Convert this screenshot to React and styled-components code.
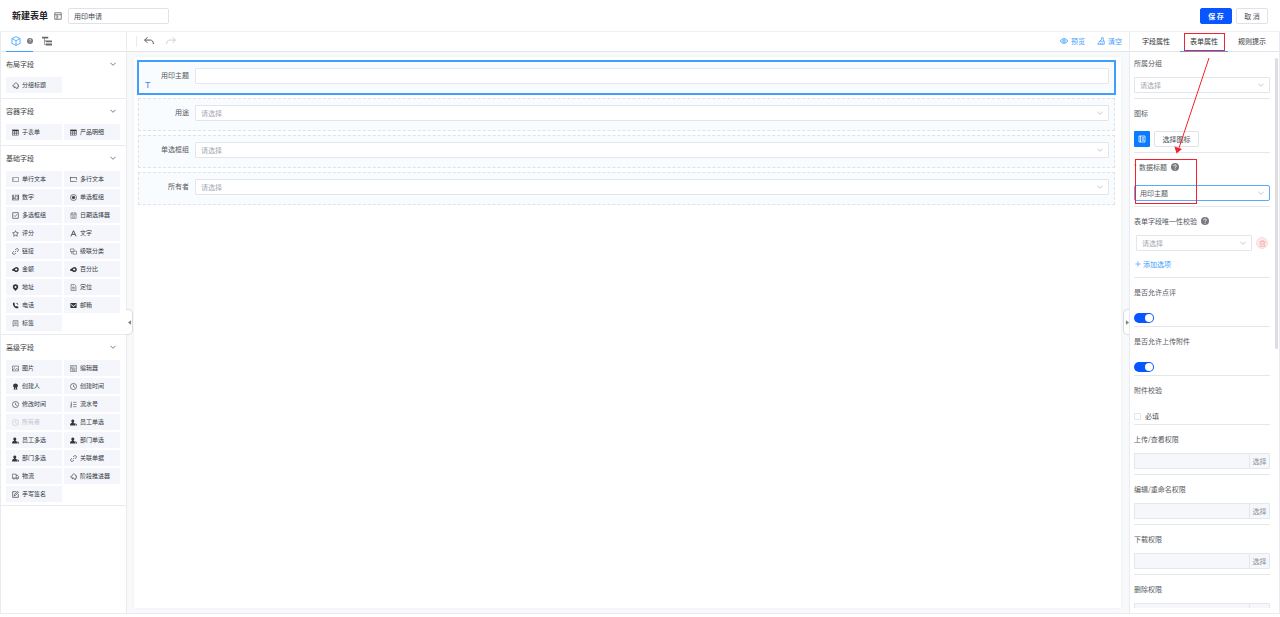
import React from "react";
import styled, { createGlobalStyle, css } from "styled-components";

const blue = "#409eff";
const line = "#e9ebf0";
const ink = "#4b4e55";

const GlobalStyle = createGlobalStyle`
  * { box-sizing: border-box; }
  body { margin: 0; background: #fff; }
  body, button, input, select {
    font-family: "Noto Sans CJK SC", sans-serif;
    font-size: 7px;
    line-height: 10px;
    color: ${ink};
  }
`;

const App = styled.div`
  position: relative;
  height: 100vh;
  display: flex;
  flex-direction: column;
  padding-bottom: 3px;
  overflow: hidden;
`;

/* header */
const Header = styled.header`
  flex: none;
  height: 32px;
  display: flex;
  align-items: center;
  padding: 0 12px;
  border-bottom: 1px solid #f0f1f4;
`;
const Title = styled.h1`
  margin: 0;
  font-size: 9px;
  line-height: 12px;
  font-weight: 700;
  color: #1f2126;
`;
const NameInput = styled.input`
  width: 101px;
  height: 16px;
  padding: 0 5px;
  border: 1px solid #dfe2e8;
  border-radius: 2px;
  color: #43464c;
  outline: none;
`;
const HeaderIcon = styled.span`
  display: flex;
  margin: 0 6px;
`;
const Spacer = styled.div`
  flex: 1;
`;
const Button = styled.button`
  height: 16px;
  width: 32px;
  padding: 0;
  margin-left: ${(p) => (p.$primary ? 0 : 4)}px;
  border-radius: 2px;
  border: 1px solid ${(p) => (p.$primary ? "#0756ff" : "#dfe2e8")};
  background: ${(p) => (p.$primary ? "#0756ff" : "#fff")};
  color: ${(p) => (p.$primary ? "#fff" : ink)};
  font-weight: ${(p) => (p.$primary ? 700 : 400)};
`;

/* frame */
const Main = styled.main`
  flex: 1;
  min-height: 0;
  display: flex;
  border: 1px solid ${line};
  border-top: 0;
`;
const Tabs = styled.div`
  flex: none;
  height: 20px;
  display: flex;
  border-bottom: 1px solid #e2e5ea;
`;

/* palette */
const Palette = styled.aside`
  flex: none;
  width: 126px;
  border-right: 1px solid ${line};
`;
const PaletteTab = styled.button`
  width: ${(p) => (p.$active ? 27 : 24)}px;
  height: 20px;
  padding: 0 0 1px ${(p) => (p.$active ? 4 : 0)}px;
  display: flex;
  align-items: center;
  justify-content: center;
  gap: 6px;
  border: 0;
  background: none;
  border-bottom: 1px solid ${(p) => (p.$active ? blue : "transparent")};
`;
const PaletteTabs = styled(Tabs)`
  padding-left: 5px;
  gap: 2px;
`;
const Section = styled.section`
  padding: 0 5px ${(p) => (p.$long ? 3 : 5)}px;
  border-bottom: 1px solid ${line};
`;
const SectionHead = styled.h2`
  margin: 0;
  height: 25px;
  display: flex;
  align-items: center;
  justify-content: space-between;
  padding: 0 5px 2px 0;
  font-size: 7px;
  line-height: 10px;
  font-weight: 400;
  color: #3c3f45;
`;
const Items = styled.div`
  display: grid;
  grid-template-columns: 56px 56px;
  gap: 2px;
`;
const Item = styled.button`
  height: 16px;
  display: flex;
  align-items: center;
  gap: 3px;
  padding: 0 0 0 6px;
  border: 0;
  background: #f4f6fc;
  font-size: 6px;
  white-space: nowrap;
  color: ${(p) => (p.disabled ? "#c0c4cc" : "#33363b")};
`;

/* work area */
const Work = styled.div`
  position: relative;
  flex: 1;
  min-width: 0;
  display: flex;
  flex-direction: column;
  background: #f8f9fa;
`;
const Toolbar = styled.div`
  flex: none;
  height: 20px;
  display: flex;
  align-items: center;
  padding: 0 7px 1px 9px;
  background: #fff;
  border-bottom: 1px solid #e2e5ea;
`;
const Separator = styled.span`
  width: 1px;
  height: 11px;
  margin-right: 7px;
  background: #e9ebf0;
`;
const ToolButton = styled.button`
  display: flex;
  align-items: center;
  gap: 3px;
  padding: 0;
  border: 0;
  background: none;
  color: ${blue};
  & + & { margin-left: ${(p) => (p.$wide ? 12 : 8)}px; }
`;
const Sheet = styled.form`
  flex: 1;
  min-height: 0;
  display: flex;
  flex-direction: column;
  gap: 4px;
  margin: 5px 8px 5px 7px;
  padding: 4px 6px 4px 4px;
  background: #fff;
  box-shadow: 0 0 3px rgba(0, 0, 0, 0.05);
`;
const FieldRow = styled.div`
  position: relative;
  height: 33px;
  display: flex;
  align-items: flex-start;
  gap: 6px;
  padding: 6px 5px 0 0;
  background: #f9fcff;
  border: 1px dashed #dfe3e8;
  ${(p) =>
    p.$selected &&
    css`
      border: 1px solid ${blue};
      outline: 1px solid ${blue};
    `}
`;
const FieldLabel = styled.label`
  width: 50px;
  line-height: 15px;
  text-align: right;
  color: #565960;
`;
const TypeMark = styled.span`
  position: absolute;
  left: 6px;
  bottom: 3px;
  font-family: "Liberation Sans", sans-serif;
  font-size: 9px;
  color: #3f86f5;
`;
const Text = styled.input`
  flex: 1;
  min-width: 0;
  height: 16px;
  border: 1px solid #e4e7ec;
  border-radius: 1px;
  background: #fff;
  outline: none;
`;
const SelectBox = styled.span`
  position: relative;
  flex: 1;
  min-width: 0;
  display: flex;
  svg {
    position: absolute;
    right: 6px;
    top: 5px;
    pointer-events: none;
    color: #a9adb5;
  }
`;
const SelectInput = styled.select`
  appearance: none;
  width: 100%;
  height: 16px;
  padding: 0 5px;
  border: 1px solid ${(p) => (p.$focused ? "#5aa9fb" : "#e2e5ea")};
  border-radius: ${(p) => (p.$focused ? 2 : 1)}px;
  background: #fff;
  outline: none;
  color: ${(p) => (p.$filled ? "#565960" : "#a4a8b0")};
`;
const Handle = styled.button`
  position: absolute;
  top: 277px;
  width: 7px;
  height: 26px;
  padding: 0;
  display: flex;
  align-items: center;
  justify-content: center;
  background: #fff;
  border: 1px solid #d9dce1;
  color: #7c8087;
  ${(p) =>
    p.$side === "left"
      ? css`
          left: -1px;
          border-left: 0;
          border-radius: 0 5px 5px 0;
        `
      : css`
          right: -1px;
          border-right: 0;
          border-radius: 5px 0 0 5px;
        `}
`;

/* properties */
const Props = styled.aside`
  position: relative;
  flex: none;
  width: 150px;
  display: flex;
  flex-direction: column;
  border-left: 1px solid ${line};
`;
const PropTabs = styled(Tabs)`
  padding-left: 2px;
`;
const PropTab = styled.button`
  width: 48px;
  height: 20px;
  padding: 0 0 2px;
  border: 0;
  border-bottom: 1px solid ${(p) => (p.$active ? blue : "transparent")};
  background: none;
  color: #303338;
`;
const PropList = styled.div`
  flex: 1;
  min-height: 0;
  overflow: hidden;
  margin-bottom: 5px;
  padding: 0 9px 0 4px;
`;
const Block = styled.div`
  padding-bottom: ${(p) => p.$bottom ?? 5}px;
  border-bottom: 1px solid #e4e6ea;
`;
const BlockLabel = styled.label`
  display: flex;
  align-items: center;
  gap: 4px;
  height: 28px;
  color: #565960;
  ${Block}:first-child > & { height: 21px; }
`;
const Required = styled.span`
  width: 1px;
  height: 10px;
  color: #ff4d4f;
  font-size: 6px;
`;
const Control = styled.div`
  display: flex;
  align-items: center;
  height: 16px;
  margin-top: ${(p) => (p.$tight ? 0 : 4)}px;
  padding-left: ${(p) => (p.$indent ? 2 : 0)}px;
`;
const IconTile = styled.span`
  width: 16px;
  height: 16px;
  display: flex;
  align-items: center;
  justify-content: center;
  margin-right: 4px;
  border-radius: 1px;
  background: #0a7cff;
  color: #fff;
`;
const PlainButton = styled.button`
  height: 16px;
  width: 45px;
  padding: 0;
  border: 1px solid #dfe2e8;
  border-radius: 2px;
  background: #fff;
`;
const RoundButton = styled.button`
  width: 12px;
  height: 12px;
  margin: 0 2px 0 4px;
  padding: 0;
  display: flex;
  align-items: center;
  justify-content: center;
  border: 1px solid #fbdcdc;
  border-radius: 50%;
  background: #fdeaea;
  color: #f5a3a3;
`;
const LinkButton = styled.button`
  height: 16px;
  display: flex;
  align-items: center;
  gap: 2px;
  margin-top: 5px;
  padding: 0 0 0 1px;
  border: 0;
  background: none;
  color: ${blue};
`;
const Switch = styled.input`
  appearance: none;
  display: flex;
  align-items: center;
  justify-content: flex-end;
  width: 20px;
  height: 10px;
  margin: 0;
  padding: 1px;
  border-radius: 5px;
  background: #0756ff;
  &::after {
    content: "";
    width: 8px;
    height: 8px;
    border-radius: 50%;
    background: #fff;
  }
`;
const CheckLabel = styled.label`
  display: flex;
  align-items: center;
  gap: 4px;
`;
const Check = styled.input`
  appearance: none;
  width: 7px;
  height: 7px;
  margin: 0;
  border: 1px solid #e2e5ea;
  border-radius: 1px;
  background: #fff;
`;
const PickText = styled.input`
  flex: 1;
  min-width: 0;
  height: 16px;
  border: 1px solid #e4e7ed;
  border-right: 0;
  border-radius: 1px 0 0 1px;
  background: #f5f7fb;
`;
const PickButton = styled.button`
  width: 21px;
  height: 16px;
  padding: 0;
  border: 1px solid #e4e7ed;
  border-radius: 0 1px 1px 0;
  background: #f5f7fa;
  color: #8b8f96;
`;
const Thumb = styled.span`
  position: absolute;
  top: 26px;
  right: 1px;
  width: 3px;
  height: 50%;
  border-radius: 2px;
  background: #dcdde0;
`;
const Notes = styled.svg`
  position: absolute;
  top: 0;
  right: 0;
  width: 150px;
  height: 210px;
  pointer-events: none;
`;

/* icons */
const S = ({ d, size = 7, w = 1.6, children, ...rest }) => (
  <svg width={size} height={size} viewBox="0 0 16 16" fill="none" stroke="currentColor" strokeWidth={w} aria-hidden="true" {...rest}>
    {d && <path d={d} />}
    {children}
  </svg>
);
const Fill = ({ d, size = 7, ...rest }) => (
  <svg width={size} height={size} viewBox="0 0 16 16" fill="currentColor" fillRule="evenodd" aria-hidden="true" {...rest}>
    <path d={d} />
  </svg>
);
const Chevron = ({ size = 6 }) => <S size={size} w={1.8} d="M1 4.5 8 11.500l7-7" />;
const Help = ({ size = 8 }) => (
  <svg width={size} height={size} viewBox="0 0 16 16" aria-hidden="true">
    <circle cx="8" cy="8" r="8" fill="#77797e" />
    <path d="M5.300 6.300c0-3.600 5.500-3.400 5.300-.2-.1 1.800-2.500 1.800-2.500 3.500" fill="none" stroke="#fff" strokeWidth="1.700" />
    <circle cx="8.100" cy="12.200" r="1.100" fill="#fff" />
  </svg>
);
const clock = "M8 1a7 7 0 1 0 0 14A7 7 0 0 0 8 1ZM8 4v4.500l3.500 1.500";
const puzzle = "M9 1.500 13 4.500v2.500h2v4h-2v3.500H9.500l-1-3-5-.5-2.500-2.500 3.500-1.500L6 3.500ZM5.500 11v3";
const link = "M6.500 9.500l3-3M7 4.500l2.500-2.500a3.200 3.200 0 0 1 4.500 4.500L11.500 9M9 11.500 6.500 14A3.200 3.200 0 0 1 2 9.500L4.500 7";
const people = "M6.500 1a3.500 3.500 0 0 1 2 6.300l-.3 1.200c2.500.7 3.800 2.500 3.800 6.500H0c0-4 1.300-5.800 4.600-6.500l-.3-1.200A3.500 3.500 0 0 1 6.500 1ZM12 9.500c2.500.3 4 2 4 5.500h-3c0-2.500-.3-4-1-5.500Z";
const coin = "M9.500 2a6 6 0 1 1-4.800 9.600H1.500V10H0V7.500h3V5h2A6 6 0 0 1 9.500 2ZM9.500 5 6.500 8l3 3L12.500 8Z";
const icons = {
  group: <S w={1.400} d={puzzle} />,
  table: (
    <S w={1.100}>
      <rect x="1" y="2" width="14" height="12" />
      <path d="M1 3.500h14" strokeWidth="2.500" />
      <path d="M1 7h14M1 10.500h14M5.700 2v12M10.300 2v12" />
    </S>
  ),
  line: <S w={1.300} d="M1 3.500h14v9H1ZM3.500 6v4" opacity="0.750" />,
  area: <S w={1.400} d="M15 9V3.500H1v9h10M12 12.500h3.500M1 2v3" />,
  number: <S w={1.300} d="M1 13.500h14M1.500 2.500h2v8m-2 0h4M6.500 2.500h3v4h-3v4h3M11 2.500h3.500v8H11M11.500 6.500h3M15 2v12M1 2v12" />,
  radio: (
    <S w={1.400}>
      <circle cx="8" cy="8" r="7" />
      <circle cx="8" cy="8" r="3" fill="currentColor" />
    </S>
  ),
  check: <S w={1.400} d="M1.500 1.500h13v13h-13ZM4.500 7.500l2.500 3 5-5.500" />,
  date: <S w={1} d="M2 2.500h12v12H2ZM2 6h12M5 .5v3M11 .5v3M4.500 9h7M4.500 12h7" />,
  star: <S w={1.400} d="M8 1.500l2 4.300 4.700.6-3.500 3.200.9 4.700L8 12l-4.100 2.300.9-4.700L1.300 6.400 6 5.800Z" />,
  letter: <S w={1.900} d="M2 14.500 8 1.500l6 13M4.500 10h7" />,
  link: <S w={1.400} d={link} />,
  cascade: <S w={1.100} d="M1 2h8v6H1ZM7 8v6h8V7H9M3 8v4h3" />,
  coin: <Fill d={coin} />,
  pin: <Fill d="M8 0.500a6.200 6.200 0 0 1 6.200 6.200c0 3.600-3.700 6.300-6.200 9.300-2.500-3-6.200-5.700-6.200-9.300A6.200 6.200 0 0 1 8 .5ZM8 4.500a2.300 2.300 0 1 0 0 4.600 2.300 2.300 0 0 0 0-4.600Z" />,
  page: <S w={1.200} d="M2.500 1h7.500l3.500 3.500V15h-11ZM5 8h6M5 11h6M6 5h2" />,
  phone: <Fill d="M2.500 1.500 5 1l2 4-1.500 1.500c.8 1.700 2 3 3.700 3.800L11 9l3.800 2-.6 2.800C9 17 0 9 2.500 1.500ZM9 1.500A5.500 5.500 0 0 1 14.500 7H13A4 4 0 0 0 9 3Z" />,
  mail: <Fill d="M1 2.500h14v11H1ZM2.500 4.500 8 9l5.500-4.500v2.300L8 11.200 2.500 6.800Z" />,
  tag: <S w={1.200} d="M2.500 1.500h11v13l-3-2.500h-5l-3 2.500ZM5 5h6M5 8.500h6" />,
  image: <S w={1.200} d="M1 2.500h14v11H1ZM1 12l4-4 3 3 3-3.500 4 4M4.500 5.500h1.500" />,
  editor: <S w={1} d="M1 1h14v14H1ZM3.500 4h4v4h-4ZM9.500 4.500h3.500M9.500 8h3.500M3.500 10.500h9M3.500 13h9" />,
  creator: <Fill d="M8 1c3.500 0 5.500 2.300 5.500 5 0 2-1 3.500-2.500 4.500l1.500 4.500h-9L5 10.500C3.500 9.500 2.500 8 2.500 6 2.500 3.300 4.500 1 8 1ZM8 10l-1.200 2L8 14l1.200-2Z" />,
  clock: <S w={1.400} d={clock} />,
  serial: <S w={1.200} d="M7 3H15M7 8H15M7 13H15M3 1.500v6M1.500 7.500h3M1 9.500h3l-3 4.500h3.500" />,
  people: <Fill d={people} />,
  truck: (
    <S w={1.300} d="M9.500 12H6.500M2.500 12H1V2.500h8.500V12M9.500 5.500H13l2 3V12h-1.500">
      <circle cx="4.500" cy="12.500" r="1.800" />
      <circle cx="11.500" cy="12.500" r="1.800" />
    </S>
  ),
  sign: <S w={1.500} d="M14.500 7v7.500h-13v-13H10M5 11l1-3.500L13.500 1 15 3 8 10Z" />,
};

const sections = [
  ["布局字段", [["group", "分组标题"]]],
  ["容器字段", [["table", "子表单"], ["table", "产品明细"]]],
  [
    "基础字段",
    [
      ["line", "单行文本"], ["area", "多行文本"],
      ["number", "数字"], ["radio", "单选框组"],
      ["check", "多选框组"], ["date", "日期选择器"],
      ["star", "评分"], ["letter", "文字"],
      ["link", "链接"], ["cascade", "级联分类"],
      ["coin", "金额"], ["coin", "百分比"],
      ["pin", "地址"], ["page", "定位"],
      ["phone", "电话"], ["mail", "邮箱"],
      ["tag", "标签"],
    ],
  ],
  [
    "高级字段",
    [
      ["image", "图片"], ["editor", "编辑器"],
      ["creator", "创建人"], ["clock", "创建时间"],
      ["clock", "修改时间"], ["serial", "流水号"],
      ["clock", "所有者", true], ["people", "员工单选"],
      ["people", "员工多选"], ["people", "部门单选"],
      ["people", "部门多选"], ["link", "关联单据"],
      ["truck", "物流"], ["group", "阶段推进器"],
      ["sign", "手写签名"],
    ],
  ],
];

const Select = ({ value = "请选择", filled, focused, ...rest }) => (
  <SelectBox>
    <SelectInput $filled={filled} $focused={focused} {...rest}>
      <option>{value}</option>
    </SelectInput>
    <Chevron />
  </SelectBox>
);

export default function FormBuilder() {
  return (
    <App lang="zh-CN">
      <GlobalStyle />
      <Header>
        <Title>新建表单</Title>
        <HeaderIcon>
          <S size={8} w={1.400} d="M1.500 1.500h13v13h-13ZM1.500 5.500h13M6 5.500v9M6 10h3" />
        </HeaderIcon>
        <NameInput aria-label="表单名称" defaultValue="用印申请" />
        <Spacer />
        <Button type="button" $primary>保 存</Button>
        <Button type="button">取 消</Button>
      </Header>

      <Main>
        <Palette>
          <PaletteTabs>
            <PaletteTab type="button" $active aria-label="字段">
              <S size={10} w={1.300} color={blue} d="M8 1l6.500 3v8L8 15l-6.500-3V4ZM1.500 4 8 7.500 14.500 4M8 7.500V15" />
              <Help size={6} />
            </PaletteTab>
            <PaletteTab type="button" aria-label="大纲">
              <Fill size={10} color="#66696f" d="M0 1h10v3H4.500v3H16v3H6V8.500H4.500V13H6v-1H16v3H6v-1H3.500V4H0Z" />
            </PaletteTab>
          </PaletteTabs>
          {sections.map(([name, items]) => (
            <Section key={name} $long={items.length > 2}>
              <SectionHead>
                {name}
                <Chevron />
              </SectionHead>
              <Items>
                {items.map(([icon, text, off]) => (
                  <Item key={text} type="button" disabled={off}>
                    {icons[icon]}
                    {text}
                  </Item>
                ))}
              </Items>
            </Section>
          ))}
        </Palette>

        <Work>
          <Toolbar>
            <Separator />
            <ToolButton type="button" aria-label="撤销">
              <S size={10} w={1.500} color="#4b4e55" d="M5.500 2 1 6.500 5.500 11M1 6.500h9c3 0 5 2 5 6.500" />
            </ToolButton>
            <ToolButton type="button" aria-label="重做">
              <S size={10} w={1.300} color="#c0c4cc" d="M10.500 2 15 6.500 10.500 11M15 6.500H6c-3 0-5 2-5 6.500" />
            </ToolButton>
            <Spacer />
            <ToolButton type="button">
              <S size={8} w={1.800} d="M.8 8C4 1.800 12 1.800 15.200 8 12 14.200 4 14.200.8 8Z">
                <circle cx="8" cy="8" r="2.500" />
              </S>
              预览
            </ToolButton>
            <ToolButton type="button" $wide>
              <S size={8} w={1.500} d="M9 1.500h3.500V6l2 2.500H5L9 5.500ZM5 8.500 1.500 14.500h13v-6M6 14.500l1.500-3M10.500 14.500v-3" />
              清空
            </ToolButton>
          </Toolbar>
          <Sheet>
            <FieldRow $selected>
              <FieldLabel htmlFor="f1">用印主题</FieldLabel>
              <Text id="f1" />
              <TypeMark>T</TypeMark>
            </FieldRow>
            {["用途", "单选框组", "所有者"].map((name) => (
              <FieldRow key={name}>
                <FieldLabel htmlFor={name}>{name}</FieldLabel>
                <Select id={name} />
              </FieldRow>
            ))}
          </Sheet>
          <Handle type="button" $side="left" aria-label="收起左侧">
            <Fill size={5} d="M13 1v14L3 8Z" />
          </Handle>
          <Handle type="button" $side="right" aria-label="收起右侧">
            <Fill size={5} d="M3 1v14l10-7Z" />
          </Handle>
        </Work>

        <Props>
          <PropTabs>
            <PropTab type="button">字段属性</PropTab>
            <PropTab type="button" $active>表单属性</PropTab>
            <PropTab type="button">规则提示</PropTab>
          </PropTabs>
          <PropList>
            <Block>
              <BlockLabel htmlFor="group">所属分组</BlockLabel>
              <Control><Select id="group" /></Control>
            </Block>
            <Block>
              <BlockLabel as="div">图标</BlockLabel>
              <Control>
                <IconTile>
                  <S size={8} w={1.500} d="M2 2h12v12H2ZM5 2v12M7.500 5.500H12M7.500 8H12M7.500 10.500H12" />
                </IconTile>
                <PlainButton type="button">选择图标</PlainButton>
              </Control>
            </Block>
            <Block>
              <BlockLabel htmlFor="title">
                <Required>*</Required>
                数据标题
                <Help />
              </BlockLabel>
              <Control><Select id="title" value="用印主题" filled focused /></Control>
            </Block>
            <Block>
              <BlockLabel htmlFor="unique">
                表单字段唯一性校验
                <Help />
              </BlockLabel>
              <Control $tight $indent>
                <Select id="unique" />
                <RoundButton type="button" aria-label="删除">
                  <S size={7} w={1.500} d="M1 4h14M3 4v11h10V4M6 4V1.500h4V4M6.500 7v5M9.500 7v5" />
                </RoundButton>
              </Control>
              <LinkButton type="button">
                <S size={6} w={1.800} d="M8 1v14M1 8h14" />
                添加选项
              </LinkButton>
            </Block>
            <Block $bottom={0}>
              <BlockLabel htmlFor="comment">是否允许点评</BlockLabel>
              <Control><Switch id="comment" type="checkbox" role="switch" defaultChecked /></Control>
            </Block>
            <Block $bottom={0}>
              <BlockLabel htmlFor="upload">是否允许上传附件</BlockLabel>
              <Control><Switch id="upload" type="checkbox" role="switch" defaultChecked /></Control>
            </Block>
            <Block $bottom={0}>
              <BlockLabel as="div">附件校验</BlockLabel>
              <Control>
                <CheckLabel><Check type="checkbox" />必填</CheckLabel>
              </Control>
            </Block>
            {["上传/查看权限", "编辑/重命名权限", "下载权限", "删除权限"].map((name) => (
              <Block key={name}>
                <BlockLabel htmlFor={name}>{name}</BlockLabel>
                <Control $tight>
                  <PickText id={name} readOnly />
                  <PickButton type="button">选择</PickButton>
                </Control>
              </Block>
            ))}
          </PropList>
          <Thumb />
        </Props>
      </Main>

      <Notes viewBox="0 0 150 210" fill="none" stroke="#f5222d" aria-hidden="true">
        <rect x="54.500" y="33.500" width="40" height="17" />
        <rect x="5.500" y="159.500" width="61" height="44" />
        <path d="M79 58 49 148" />
        <path d="M46.500 153.500 44.500 146.500l7.500 2.500Z" fill="#f5222d" stroke="none" />
      </Notes>
    </App>
  );
}
